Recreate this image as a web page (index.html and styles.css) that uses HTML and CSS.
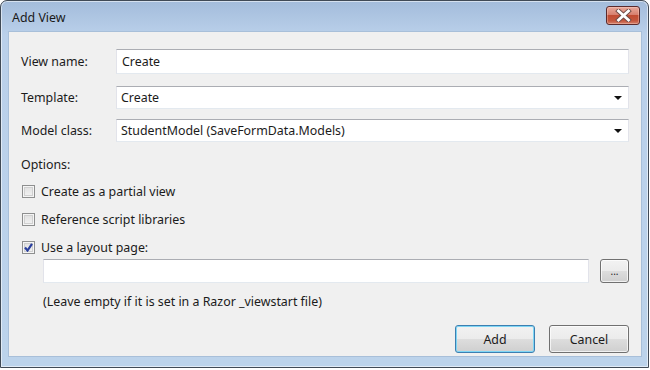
FILE: index.html
```html
<!DOCTYPE html>
<html lang="en">
<head>
    <meta charset="UTF-8">
    <title>Add View</title>
    <link rel="stylesheet" href="styles.css">
</head>
<body>
    <div class="window">
        <div class="titlebar">
            <span class="title">Add View</span>
            <button class="close-button" title="Close">
                <svg width="17" height="13" viewBox="0 0 17 13">
                    <path d="M3.5 2 L13.5 11 M13.5 2 L3.5 11" stroke="#6e4a45" stroke-width="4.6" stroke-linecap="square"/>
                    <path d="M3.5 2 L13.5 11 M13.5 2 L3.5 11" stroke="#ffffff" stroke-width="2.8" stroke-linecap="square"/>
                </svg>
            </button>
        </div>

        <div class="client">
            <div class="field-row row-name">
                <label class="field-label">View name:</label>
                <div class="textbox">Create</div>
            </div>
            <div class="field-row row-template">
                <label class="field-label">Template:</label>
                <div class="textbox combo">Create<span class="arrow"></span></div>
            </div>
            <div class="field-row row-model">
                <label class="field-label">Model class:</label>
                <div class="textbox combo">StudentModel (SaveFormData.Models)<span class="arrow"></span></div>
            </div>

            <div class="options-label">Options:</div>

            <div class="check-row">
                <span class="checkbox"></span>
                <span>Create as a partial view</span>
            </div>
            <div class="check-row">
                <span class="checkbox"></span>
                <span>Reference script libraries</span>
            </div>
            <div class="check-row">
                <span class="checkbox checked">
                    <svg width="9" height="9" viewBox="0 0 9 9">
                        <path d="M1 4.5 L3.5 7.5 L8 0.8" fill="none" stroke="#2a3f9e" stroke-width="2.2"/>
                    </svg>
                </span>
                <span>Use a layout page:</span>
            </div>

            <div class="layout-row">
                <div class="textbox layout-input"></div>
                <button class="button browse">...</button>
            </div>
            <div class="hint">(Leave empty if it is set in a Razor _viewstart file)</div>

            <div class="actions">
                <button class="button default">Add</button>
                <button class="button">Cancel</button>
            </div>
        </div>
    </div>
</body>
</html>
```

FILE: styles.css
```css
* {
    box-sizing: border-box;
}

body {
    margin: 0;
    font-family: "Noto Sans", "Liberation Sans", sans-serif;
    font-size: 12.4px;
    color: #1b1b1b;
    background: #ffffff;
}

.window {
    width: 649px;
    height: 368px;
    border: 1px solid #404a56;
    border-radius: 7px 7px 0 0;
    background: linear-gradient(to bottom, #a3bcdb 0, #bad0ea 34px, #bcd3eb 100%);
    box-shadow: inset 0 0 0 1px rgba(255, 255, 255, 0.55);
    display: flex;
    flex-direction: column;
}

.titlebar {
    height: 30px;
    display: flex;
    align-items: center;
    justify-content: space-between;
    padding: 0 8px 0 11px;
}

.title {
    color: #1a1a1a;
    margin-top: 2px;
}

.close-button {
    width: 34px;
    height: 19px;
    margin-top: -1px;
    padding: 0;
    border: 1px solid #5b2a2c;
    border-radius: 3px;
    background: linear-gradient(to bottom, #e9a99b 0, #d7806f 45%, #c14c33 50%, #c4563d 80%, #d5816c 100%);
    box-shadow: inset 0 0 0 1px rgba(255, 220, 210, 0.35);
    display: flex;
    align-items: center;
    justify-content: center;
}

.client {
    flex: 1;
    margin: 0 6px 10px 7px;
    background: #f0f0f0;
    border: 1px solid #a8bfd9;
    padding: 17px 12px 0 12px;
}

.field-row {
    display: flex;
    align-items: center;
}

.field-label {
    width: 95px;
    flex-shrink: 0;
}

.row-name {
    height: 25px;
    margin-bottom: 12px;
}

.row-template {
    height: 23px;
    margin-bottom: 10px;
}

.row-model {
    height: 23px;
}

.textbox {
    flex: 1;
    height: 100%;
    background: #ffffff;
    border: 1px solid #e2e3ea;
    border-top-color: #abadb3;
    border-bottom-color: #e3e9ef;
    padding: 0 5px;
    display: flex;
    align-items: center;
    position: relative;
}

.combo {
    padding-left: 4px;
}

.arrow {
    position: absolute;
    right: 6px;
    top: 50%;
    margin-top: -2px;
    border-left: 4px solid transparent;
    border-right: 4px solid transparent;
    border-top: 4px solid #111111;
}

.options-label {
    margin-top: 15px;
    line-height: 16px;
}

.check-row {
    display: flex;
    align-items: center;
    height: 20px;
    margin-top: 8px;
}

.checkbox {
    width: 13px;
    height: 13px;
    margin: 0 6px 0 1px;
    border: 1px solid #8e8f8f;
    background: linear-gradient(to bottom, #dedede, #f4f4f4);
    box-shadow: inset 0 0 0 1px #f5f5f5, inset 0 0 0 2px #d0d0d0;
    display: flex;
    align-items: center;
    justify-content: center;
}

.layout-row {
    display: flex;
    height: 24px;
    margin: 2px 0 0 22px;
    gap: 11px;
}

.layout-input {
    height: 24px;
}

.hint {
    margin: 11px 0 0 22px;
    line-height: 16px;
}

.button {
    font-family: inherit;
    font-size: 12.4px;
    color: #1b1b1b;
    border: 1px solid #707070;
    border-radius: 3px;
    background: linear-gradient(to bottom, #f2f2f2 0, #ebebeb 50%, #dddddd 51%, #cfcfcf 100%);
    box-shadow: inset 0 0 0 1px rgba(255, 255, 255, 0.7);
    padding: 0;
}

.browse {
    width: 29px;
    height: 24px;
    font-size: 10px;
    line-height: 14px;
}

.actions {
    display: flex;
    justify-content: flex-end;
    gap: 14px;
    margin-top: 15px;
}

.actions .button {
    width: 80px;
    height: 28px;
}

.actions .default {
    border-color: #3c7fb1;
    box-shadow: inset 0 0 0 1px #7fd6f5;
}
```
